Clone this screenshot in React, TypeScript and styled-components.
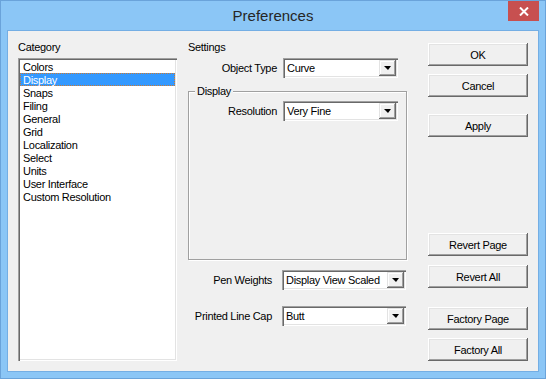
import React from "react";
import styled, { createGlobalStyle } from "styled-components";

const GlobalStyle = createGlobalStyle`
  html, body {
    margin: 0;
    padding: 0;
    background: #8bc6f6;
  }
  * {
    box-sizing: border-box;
  }
`;

const Window = styled.div`
  width: 546px;
  height: 379px;
  border: 1px solid #6aa3da;
  background: #8bc6f6;
  padding: 0 6px 6px 6px;
  display: flex;
  flex-direction: column;
  font-family: "Liberation Sans", Arial, sans-serif;
  font-size: 11px;
  letter-spacing: -0.3px;
  color: #000;
`;

const TitleBar = styled.div`
  height: 29px;
  display: grid;
  grid-template-columns: 1fr auto 1fr;
  align-items: start;
  margin: 0 -6px;
`;

const Title = styled.div`
  grid-column: 2;
  font-size: 15px;
  letter-spacing: 0;
  line-height: 30px;
  color: #262626;
`;

const CloseButton = styled.div`
  grid-column: 3;
  justify-self: end;
  margin-right: 6px;
  width: 31px;
  height: 20px;
  background: #c75050;
  display: flex;
  align-items: center;
  justify-content: center;
`;

const Client = styled.div`
  flex: 1;
  border: 1px solid #74aee4;
  background: #f0f0f0;
  padding: 10px;
  display: flex;
  align-items: flex-start;
`;

const Column = styled.div<{ $width: number; $ml: number }>`
  width: ${(p) => p.$width}px;
  margin-left: ${(p) => p.$ml}px;
  flex-shrink: 0;
  display: flex;
  flex-direction: column;
`;

const Label = styled.div`
  height: 13px;
  line-height: 13px;
  white-space: nowrap;
`;

const sunken = `
  box-shadow: inset 1px 1px #a0a0a0, inset 2px 2px #696969,
    inset -1px -1px #ffffff, inset -2px -2px #e3e3e3;
`;

const ListBox = styled.div`
  margin-top: 4px;
  height: 303px;
  background: #fff;
  padding: 2px;
  ${sunken}
`;

const ListItem = styled.div<{ $selected?: boolean }>`
  height: 13px;
  line-height: 12px;
  padding-left: 2px;
  white-space: nowrap;
  background: ${(p) => (p.$selected ? "#3399ff" : "transparent")};
  color: ${(p) => (p.$selected ? "#fff" : "#000")};
  border: 1px dotted ${(p) => (p.$selected ? "#cc7a33" : "transparent")};
`;

const FieldRow = styled.div<{ $label: number; $combo: number; $gap: number; $mt: number }>`
  margin-top: ${(p) => p.$mt}px;
  display: grid;
  grid-template-columns: ${(p) => p.$label}px ${(p) => p.$combo}px;
  column-gap: ${(p) => p.$gap}px;
  align-items: center;
  height: 20px;
`;

const FieldLabel = styled.div`
  text-align: right;
  white-space: nowrap;
`;

const Combo = styled.div`
  height: 20px;
  background: #fff;
  padding: 2px;
  display: flex;
  align-items: stretch;
  ${sunken}
`;

const ComboText = styled.div`
  flex: 1;
  padding-left: 2px;
  line-height: 16px;
  white-space: nowrap;
  overflow: hidden;
`;

const ComboArrow = styled.div`
  width: 17px;
  flex-shrink: 0;
  background: #f0f0f0;
  display: flex;
  align-items: center;
  justify-content: center;
  box-shadow: inset -1px -1px #696969, inset 1px 1px #e3e3e3,
    inset -2px -2px #a0a0a0, inset 2px 2px #ffffff;

  &::after {
    content: "";
    width: 0;
    height: 0;
    border-left: 4px solid transparent;
    border-right: 3px solid transparent;
    border-top: 4px solid #000;
  }
`;

const GroupBox = styled.div`
  position: relative;
  margin-top: 13px;
  height: 169px;
  border: 1px solid #a0a0a0;
  box-shadow: inset 1px 1px #fff, 1px 1px #fff;
  padding-top: 9px;
`;

const Legend = styled.span`
  position: absolute;
  top: -7px;
  left: 6px;
  padding: 0 2px;
  line-height: 13px;
  background: #f0f0f0;
`;

const Button = styled.div<{ $mt: number }>`
  margin-top: ${(p) => p.$mt}px;
  height: 23px;
  display: flex;
  align-items: center;
  justify-content: center;
  background: #f0f0f0;
  box-shadow: inset -1px -1px #696969, inset 1px 1px #ffffff,
    inset -2px -2px #a0a0a0, inset 2px 2px #e3e3e3;
`;

const categories = [
  "Colors",
  "Display",
  "Snaps",
  "Filing",
  "General",
  "Grid",
  "Localization",
  "Select",
  "Units",
  "User Interface",
  "Custom Resolution",
];

const buttons: [string, number][] = [
  ["OK", 2],
  ["Cancel", 8],
  ["Apply", 17],
  ["Revert Page", 96],
  ["Revert All", 9],
  ["Factory Page", 19],
  ["Factory All", 8],
];

function Select({ value }: { value: string }) {
  return (
    <Combo>
      <ComboText>{value}</ComboText>
      <ComboArrow />
    </Combo>
  );
}

export default function App() {
  return (
    <Window>
      <GlobalStyle />
      <TitleBar>
        <Title>Preferences</Title>
        <CloseButton>
          <svg width="10" height="9" viewBox="0 0 10 9">
            <path d="M1 0.5 L9 8.5 M9 0.5 L1 8.5" stroke="#fff" strokeWidth="2" />
          </svg>
        </CloseButton>
      </TitleBar>
      <Client>
        <Column $width={159} $ml={0}>
          <Label>Category</Label>
          <ListBox>
            {categories.map((c) => (
              <ListItem key={c} $selected={c === "Display"}>
                {c}
              </ListItem>
            ))}
          </ListBox>
        </Column>

        <Column $width={219} $ml={11}>
          <Label>Settings</Label>
          <FieldRow $label={89} $combo={115} $gap={6} $mt={4}>
            <FieldLabel>Object Type</FieldLabel>
            <Select value="Curve" />
          </FieldRow>
          <GroupBox>
            <Legend>Display</Legend>
            <FieldRow $label={88} $combo={115} $gap={6} $mt={0}>
              <FieldLabel>Resolution</FieldLabel>
              <Select value="Very Fine" />
            </FieldRow>
          </GroupBox>
          <FieldRow $label={84} $combo={124} $gap={10} $mt={10}>
            <FieldLabel>Pen Weights</FieldLabel>
            <Select value="Display View Scaled" />
          </FieldRow>
          <FieldRow $label={84} $combo={124} $gap={10} $mt={16}>
            <FieldLabel>Printed Line Cap</FieldLabel>
            <Select value="Butt" />
          </FieldRow>
        </Column>

        <Column $width={100} $ml={21}>
          {buttons.map(([text, mt]) => (
            <Button key={text} $mt={mt}>
              {text}
            </Button>
          ))}
        </Column>
      </Client>
    </Window>
  );
}
